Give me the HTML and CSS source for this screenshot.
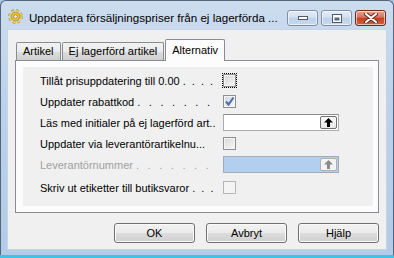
FILE: index.html
```html
<!DOCTYPE html>
<html lang="sv">
<head>
    <meta charset="UTF-8">
    <title>Uppdatera försäljningspriser</title>
    <link rel="stylesheet" href="styles.css">
</head>
<body>
    <div class="window">
        <div class="titlebar">
            <svg class="app-icon" width="15" height="15" viewBox="0 0 16 16">
                <circle cx="8" cy="8" r="5.6" fill="none" stroke="#8a8a7a" stroke-width="4.4" stroke-dasharray="2.4 2"/>
                <circle cx="8" cy="8" r="5.6" fill="none" stroke="#f4cf3c" stroke-width="3.2" stroke-dasharray="2.4 2"/>
                <circle cx="8" cy="8" r="4.6" fill="#f1c232" stroke="#9a8a50" stroke-width="0.8"/>
                <circle cx="8" cy="8" r="2" fill="#e8eef6" stroke="#8a7a40" stroke-width="0.8"/>
            </svg>
            <span class="title">Uppdatera försäljningspriser från ej lagerförda ...</span>
            <div class="caption">
                <span class="cap">
                    <svg width="12" height="6" viewBox="0 0 12 6"><rect x="1.5" y="1.5" width="9" height="3" fill="#fff" stroke="#4a5a70"/></svg>
                </span>
                <span class="cap">
                    <svg width="12" height="9" viewBox="0 0 12 9"><rect x="1.5" y="0.5" width="9" height="8" fill="#fff" stroke="#4a5a70"/><rect x="3.5" y="3.5" width="5" height="3" fill="#5a6a80"/></svg>
                </span>
                <span class="cap close">
                    <svg width="14" height="10" viewBox="0 0 14 10">
                        <path d="M2 1 L12 9 M12 1 L2 9" stroke="#5a2a20" stroke-width="4" stroke-linecap="round"/>
                        <path d="M2 1 L12 9 M12 1 L2 9" stroke="#fff" stroke-width="2.2" stroke-linecap="round"/>
                    </svg>
                </span>
            </div>
        </div>

        <div class="client">
            <div class="tabs">
                <span class="tab">Artikel</span>
                <span class="tab">Ej lagerförd artikel</span>
                <span class="tab active">Alternativ</span>
            </div>

            <div class="panel">
                <div class="group">
                    <div class="row">
                        <span class="label">Tillåt prisuppdatering till 0.00 <span class="dots">. . . .</span></span>
                        <span class="check focus"></span>
                    </div>
                    <div class="row">
                        <span class="label">Uppdater rabattkod <span class="dots wide">. . . . . . .</span></span>
                        <span class="check checked">
                            <svg width="11" height="11" viewBox="0 0 11 11"><path d="M2 5.5 L4.5 8.5 L9.5 1.5" fill="none" stroke="#4a6aa8" stroke-width="2"/></svg>
                        </span>
                    </div>
                    <div class="row">
                        <span class="label">Läs med initialer på ej lagerförd art..</span>
                        <span class="textbox">
                            <span class="pick">
                                <svg width="9" height="9" viewBox="0 0 9 9"><polygon points="4.5,0 9,4.5 6,4.5 6,9 3,9 3,4.5 0,4.5" fill="#000"/></svg>
                            </span>
                        </span>
                    </div>
                    <div class="row">
                        <span class="label">Uppdater via leverantörartikelnu...</span>
                        <span class="check"></span>
                    </div>
                    <div class="row">
                        <span class="label disabled">Leverantörnummer <span class="dots wide">. . . . . . .</span></span>
                        <span class="textbox selected">
                            <span class="pick off">
                                <svg width="9" height="9" viewBox="0 0 9 9"><polygon points="4.5,0 9,4.5 6,4.5 6,9 3,9 3,4.5 0,4.5" fill="#8a8a8a"/></svg>
                            </span>
                        </span>
                    </div>
                    <div class="row last">
                        <span class="label">Skriv ut etiketter till butiksvaror <span class="dots">. . .</span></span>
                        <span class="check off"></span>
                    </div>
                </div>
            </div>

            <div class="buttons">
                <button class="btn">OK</button>
                <button class="btn">Avbryt</button>
                <button class="btn">Hjälp</button>
            </div>
        </div>
    </div>
</body>
</html>
```

FILE: styles.css
```css
/* Reset */
* {
    margin: 0;
    padding: 0;
    box-sizing: border-box;
}

body {
    width: 394px;
    height: 258px;
    overflow: hidden;
    background: linear-gradient(#a8c4e4 0, #a8c4e4 255px, #3ec3e6 255px);
    font-family: "Liberation Sans", Arial, sans-serif;
    font-size: 11px;
    color: #000;
}

/* Window frame */
.window {
    width: 394px;
    height: 255px;
    border: 1px solid #55657a;
    border-bottom: none;
    border-radius: 6px 6px 0 0;
    background: linear-gradient(#cddcef, #bcd2ea 40%, #b3cbe7);
    padding: 0 6px 5px 6px;
    display: flex;
    flex-direction: column;
}

/* Title bar */
.titlebar {
    height: 28px;
    display: flex;
    align-items: center;
    padding-left: 1px;
}

.app-icon {
    margin-top: 3px;
    flex-shrink: 0;
}

.title {
    margin-left: 6px;
    margin-top: 4px;
    font-size: 11.6px;
    color: #000;
    white-space: nowrap;
}

.caption {
    margin-left: auto;
    margin-right: 1px;
    margin-top: 6px;
    display: flex;
    gap: 3px;
}

.cap {
    width: 31px;
    height: 16px;
    border: 1px solid #7d8ea6;
    border-radius: 3px;
    background: linear-gradient(#e4ecf7, #d3e0f0 45%, #bfd1e8 50%, #c9daee);
    box-shadow: inset 0 0 0 1px rgba(255, 255, 255, 0.6);
    display: flex;
    align-items: center;
    justify-content: center;
}

.cap.close {
    width: 31px;
    border-color: #6f2a1e;
    background: linear-gradient(#e8a493, #d7735c 45%, #c4401f 50%, #d5603f);
}

/* Client area */
.client {
    flex: 1;
    background: #f0f0f0;
    border: 1px solid #c6d4e5;
    padding: 9px 7px 0 7px;
    display: flex;
    flex-direction: column;
}

/* Tabs */
.tabs {
    display: flex;
    align-items: flex-end;
    height: 22px;
    margin-bottom: -1px;
    padding-left: 1px;
    position: relative;
    z-index: 1;
}

.tab {
    height: 18px;
    margin-bottom: 1px;
    padding: 0 6px;
    border: 1px solid #898c95;
    border-bottom: none;
    border-radius: 2px 2px 0 0;
    background: linear-gradient(#f2f2f2, #ebebeb 50%, #dddddd 51%, #cfcfcf);
    line-height: 16px;
    margin-right: -1px;
}

.tab + .tab {
    margin-left: 2px;
}

.tab.active {
    height: 22px;
    margin-bottom: 0;
    background: #fcfcfc;
    line-height: 20px;
    padding: 0 6px;
}

/* Tab page */
.panel {
    height: 153px;
    border: 1px solid #898c95;
    background: #fcfcfc;
    padding: 6px 5px 6px 7px;
}

.group {
    height: 100%;
    background: #f0f0f0;
    padding-top: 3px;
}

.row {
    height: 21px;
    display: flex;
    align-items: center;
}

.row.last {
    margin-top: 2px;
}

.label {
    width: 200px;
    flex-shrink: 0;
    padding-left: 17px;
    white-space: nowrap;
}

.label.disabled {
    color: #a0a0a0;
}

.dots {
    word-spacing: 3px;
}

.dots.wide {
    word-spacing: 5.5px;
}

/* Checkboxes */
.check {
    width: 13px;
    height: 13px;
    border: 1px solid #8e8f8f;
    background: linear-gradient(135deg, #d6d6d6, #f8f8f8);
    box-shadow: inset 0 0 0 1px #f4f4f4;
    display: flex;
    align-items: center;
    justify-content: center;
}

.check.focus {
    outline: 1px dotted #000;
    outline-offset: 0;
}

.check.checked {
    background: linear-gradient(135deg, #cfd7e6, #f4f6fa);
}

.check.off {
    border-color: #b6b6b6;
    background: #f4f4f4;
    box-shadow: none;
}

/* Text fields with pick button */
.textbox {
    width: 116px;
    height: 17px;
    border: 1px solid #abadb3;
    border-top-color: #8a8c92;
    background: #fff;
    display: flex;
    align-items: center;
    justify-content: flex-end;
    padding-right: 1px;
}

.textbox.selected {
    background: #b2cff0;
    border-color: #a2aab6;
}

.pick {
    width: 17px;
    height: 13px;
    border: 1px solid #6f6f6f;
    border-radius: 2px;
    background: linear-gradient(#fbfbfb, #e8e8e8);
    display: flex;
    align-items: center;
    justify-content: center;
}

.pick.off {
    border-color: #b0b0b0;
    background: #f4f4f4;
}

/* Dialog buttons */
.buttons {
    display: flex;
    justify-content: flex-end;
    gap: 11px;
    margin-top: 10px;
}

.btn {
    width: 81px;
    height: 20px;
    border: 1px solid #707070;
    border-radius: 3px;
    background: linear-gradient(#f2f2f2, #ebebeb 50%, #dddddd 51%, #cfcfcf);
    box-shadow: inset 0 0 0 1px #fbfbfb;
    font-family: "Liberation Sans", Arial, sans-serif;
    font-size: 11px;
    color: #000;
}
```
